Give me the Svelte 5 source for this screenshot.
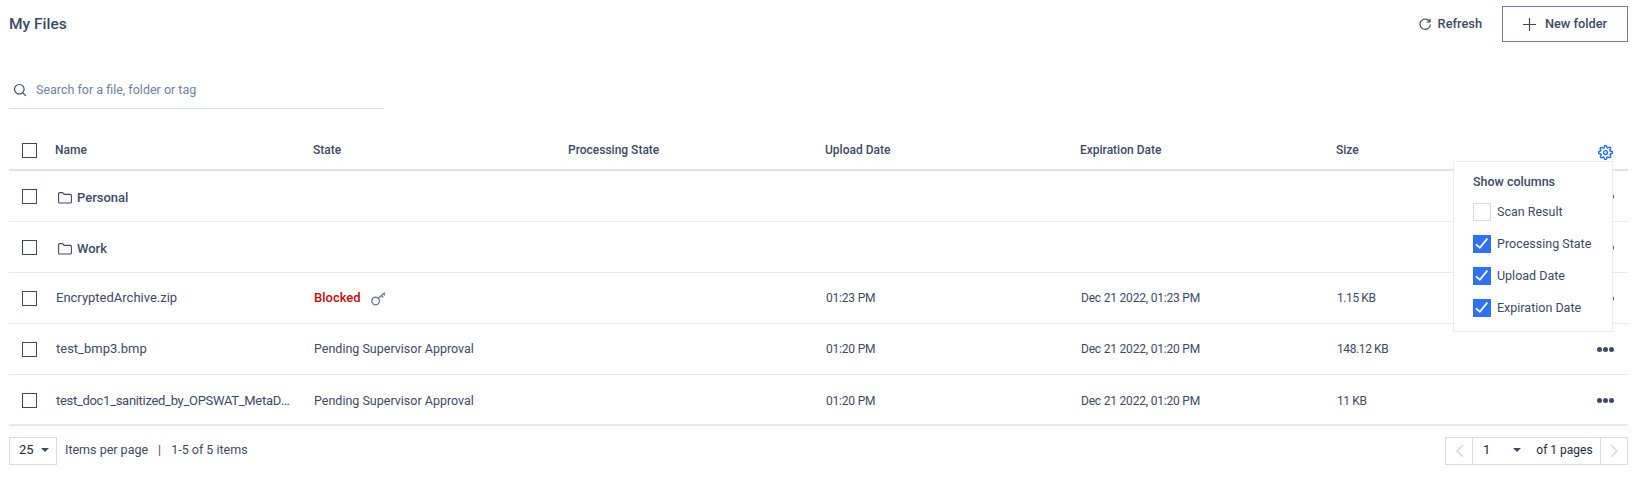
<script>
  const rows = [
    { name: 'Personal', folder: true },
    { name: 'Work', folder: true },
    { name: 'EncryptedArchive.zip', blocked: true, up: '01:23 PM', exp: 'Dec 21 2022, 01:23 PM', size: '1.15 KB' },
    { name: 'test_bmp3.bmp', state: 'Pending Supervisor Approval', up: '01:20 PM', exp: 'Dec 21 2022, 01:20 PM', size: '148.12 KB' },
    { name: 'test_doc1_sanitized_by_OPSWAT_MetaDefender.docx', state: 'Pending Supervisor Approval', up: '01:20 PM', exp: 'Dec 21 2022, 01:20 PM', size: '11 KB' }
  ];
  const cols = [
    { label: 'Scan Result', on: false },
    { label: 'Processing State', on: true },
    { label: 'Upload Date', on: true },
    { label: 'Expiration Date', on: true }
  ];
</script>

<div class="page">
  <header class="top">
    <h1>My Files</h1>
    <div class="actions">
      <button class="refresh">
        <svg width="12" height="13" viewBox="0 0 12 13" fill="none" stroke="#3d4a66" stroke-width="1.2"><path d="M10.7 3.6A5.2 5.2 0 1 0 11.4 6.5"/><path d="M11 .8v3.2H7.8"/></svg>
        Refresh
      </button>
      <button class="newf">
        <svg width="13" height="13" viewBox="0 0 13 13" stroke="#3d4a66" stroke-width="1.2"><path d="M6.5 0v13M0 6.5h13"/></svg>
        New folder
      </button>
    </div>
  </header>

  <div class="search">
    <svg width="14" height="14" viewBox="0 0 14 14" fill="none" stroke="#3d4a66" stroke-width="1.2"><circle cx="6.3" cy="6.3" r="4.8"/><path d="M9.8 9.8l3 3"/></svg>
    <span>Search for a file, folder or tag</span>
  </div>

  <div class="table">
    <div class="row head">
      <span class="cb"></span>
      <span>Name</span><span>State</span><span>Processing State</span><span>Upload Date</span><span>Expiration Date</span><span>Size</span>
      <span class="end">
        <svg class="gear" width="15" height="15" viewBox="0 0 24 24" fill="none" stroke="#1d6bfc" stroke-width="2.2" stroke-linejoin="round"><circle cx="12" cy="12" r="3"/><path d="M19.4 15a1.65 1.65 0 0 0 .33 1.82l.06.06a2 2 0 1 1-2.83 2.83l-.06-.06a1.65 1.65 0 0 0-2.82 1.17V21a2 2 0 0 1-4 0v-.09a1.65 1.65 0 0 0-2.82-1.12l-.06.06a2 2 0 1 1-2.83-2.83l.06-.06A1.65 1.65 0 0 0 3.09 14H3a2 2 0 0 1 0-4h.09a1.65 1.65 0 0 0 1.12-2.82l-.06-.06a2 2 0 1 1 2.83-2.83l.06.06A1.65 1.65 0 0 0 10 3.09V3a2 2 0 0 1 4 0v.09a1.65 1.65 0 0 0 2.82 1.12l.06-.06a2 2 0 1 1 2.83 2.83l-.06.06A1.65 1.65 0 0 0 20.91 10H21a2 2 0 0 1 0 4h-.09a1.65 1.65 0 0 0-1.51 1z"/></svg>
      </span>
    </div>
    {#each rows as r}
      <div class="row body">
        <span class="cb"></span>
        <span class="name" class:folder={r.folder} class:long={r.name.length > 30}>
          {#if r.folder}
            <svg width="14" height="12" viewBox="0 0 14 12" fill="none" stroke="#3d4a66" stroke-width="1.1" stroke-linejoin="round"><path d="M.6 10V1.6a1 1 0 0 1 1-1h3l1.4 1.8h6.4a1 1 0 0 1 1 1V10a1 1 0 0 1-1 1H1.6a1 1 0 0 1-1-1z"/></svg>
          {/if}
          <span class="ell">{r.name}</span>
        </span>
        <span class="state">
          {#if r.blocked}
            <b>Blocked</b>
            <svg width="16" height="16" viewBox="0 0 16 16" fill="none" stroke="#6f7ca3" stroke-width="1.4"><circle cx="4.6" cy="11" r="3.8"/><path d="M7.4 8.2l6.4-5.8M10.4 5.6l1.8 1.8M12.4 3.6l1.6 1.6"/></svg>
          {:else}{r.state ?? ''}{/if}
        </span>
        <span></span>
        <span class="date">{r.up ?? ''}</span>
        <span class="date">{r.exp ?? ''}</span>
        <span class="date sz">{r.size ?? ''}</span>
        <span class="end"><i class="dots"><i></i><i></i><i></i></i></span>
      </div>
    {/each}

    <div class="pop">
      <div class="pt">Show columns</div>
      {#each cols as c}
        <div class="opt">
          <span class="box" class:on={c.on}>
            {#if c.on}<svg width="18" height="18" viewBox="0 0 18 18" fill="none" stroke="#fff" stroke-width="1.7"><path d="M3 9.3l3.8 3.4L14.3 3.6"/></svg>{/if}
          </span>
          {c.label}
        </div>
      {/each}
    </div>
  </div>

  <footer class="foot">
    <div class="left">
      <div class="sel"><span>25</span><i class="tri"></i></div>
      <span class="ft">Items per page</span>
      <span class="ft sep">|</span>
      <span class="ft">1-5 of 5 items</span>
    </div>
    <div class="pager">
      <span class="arrow"><svg width="9" height="14" viewBox="0 0 9 14" fill="none" stroke="#d9dbe2" stroke-width="1.6"><path d="M8 1L2 7l6 6"/></svg></span>
      <span class="num"><span>1</span><i class="tri"></i><span class="of">of 1 pages</span></span>
      <span class="arrow"><svg width="9" height="14" viewBox="0 0 9 14" fill="none" stroke="#d9dbe2" stroke-width="1.6"><path d="M1 1l6 6-6 6"/></svg></span>
    </div>
  </footer>
</div>

<style>
  :global(body) { margin: 0; background: #fff; }
  .page {
    width: 1652px; height: 496px; box-sizing: border-box; padding: 6px 24px 0 9px;
    font: 12.5px/16px Roboto, sans-serif; color: #3d4a66; overflow: hidden;
  }
  .top { display: flex; justify-content: space-between; align-items: center; height: 36px; }
  h1 { margin: 0; font-size: 15.5px; font-weight: 500; }
  .actions { display: flex; align-items: center; gap: 20px; }
  button { font: inherit; font-size: 12.8px; font-weight: 500; color: inherit; background: none; border: 0; padding: 0; display: flex; align-items: center; }
  .refresh { gap: 7px; }
  .newf { width: 126px; height: 36px; box-sizing: border-box; border: 1px solid #6f7ca3; justify-content: center; gap: 9px; }
  .search {
    margin-top: 30px; width: 375px; height: 37px; box-sizing: border-box; border-bottom: 1px solid #d9dde9;
    display: flex; align-items: center; gap: 9px; padding: 1px 0 1px 4px; color: #727fa3;
  }
  .table { position: relative; margin-top: 11px; }
  .row {
    display: grid; grid-template-columns: 46px 258px 255px 257px 255px 256px 200px 1fr; align-items: center;
    border-bottom: 1px solid #e6e8f0;
  }
  .head { height: 51px; padding-top: 11px; font-size: 12px; font-weight: 500; border-bottom: 2px solid #dfe2ee; box-sizing: border-box; }
  .body { height: 51px; box-sizing: border-box; }
  .body > span:not(.cb) { padding-left: 1px; }
  .body:nth-last-child(2) { border-bottom-width: 2px; padding-top: 2px; }
  .cb { width: 15px; height: 15px; box-sizing: border-box; border: 1px solid #3d4a66; margin-left: 13px; display: block; }
  .name { font-size: 13px; min-width: 0; display: flex; align-items: center; gap: 5px; padding-right: 14px; }
  .long { letter-spacing: -0.3px; padding-right: 19px; }
  .folder { padding-left: 3px !important; padding-top: 3px; font-weight: 500; }
  .ell { overflow: hidden; white-space: nowrap; text-overflow: ellipsis; }
  .state { display: flex; align-items: center; gap: 10px; }
  .state b { color: #c70a0a; font-size: 13px; font-weight: 500; }
  .date { font-size: 12px; letter-spacing: -0.2px; white-space: nowrap; }
  .sz { letter-spacing: -0.4px; }
  .end { display: flex; justify-content: flex-end; }
  .gear { margin: 4px 15px 0 0; display: block; }
  .dots { display: flex; gap: 1px; margin-right: 14px; }
  .dots i { width: 5px; height: 5px; border-radius: 50%; background: #3d4a66; display: block; }
  .pop {
    position: absolute; left: 1444px; top: 41px; width: 160px; height: 171px; box-sizing: border-box;
    background: #fff; border: 1px solid #ebebf0; padding: 12px 19px;
  }
  .pt { font-weight: 500; margin-bottom: 6px; }
  .opt { display: flex; align-items: center; height: 32px; gap: 6px; }
  .box { width: 18px; height: 18px; box-sizing: border-box; border: 1px solid #d9dbe0; display: block; }
  .box.on { background: #2b72f6; border: 0; }
  .box svg { display: block; }
  .foot { display: flex; justify-content: space-between; margin-top: 11px; }
  .left { display: flex; align-items: center; gap: 8px; }
  .ft { margin-bottom: 2px; }
  .sel { width: 48px; height: 28px; box-sizing: border-box; border: 1px solid #d9dbe0; display: flex; align-items: center; gap: 7px; padding: 0 0 2px 9px; color: #222b40; font-size: 13px; }
  .sep { margin: 0 2px 2px; }
  .tri { width: 0; height: 0; border: 4.5px solid transparent; border-top: 4.5px solid #3d4a66; border-bottom: 0; display: block; flex: none; }
  .pager { width: 183px; height: 28px; box-sizing: border-box; border: 1px solid #d9dbe0; display: flex; }
  .arrow { width: 26px; display: flex; align-items: center; justify-content: center; }
  .num { flex: 1; border: solid #d9dbe0; border-width: 0 1px; display: flex; align-items: center; padding: 0 0 2px 10px; color: #222b40; font-size: 13px; }
  .num .tri { margin: 0 15px 0 23px; }
  .of { white-space: nowrap; font-size: 12px; }
</style>
